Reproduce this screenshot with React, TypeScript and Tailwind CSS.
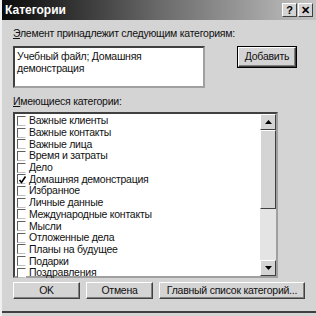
const categories = [
  "Важные клиенты",
  "Важные контакты",
  "Важные лица",
  "Время и затраты",
  "Дело",
  "Домашняя демонстрация",
  "Избранное",
  "Личные данные",
  "Международные контакты",
  "Мысли",
  "Отложенные дела",
  "Планы на будущее",
  "Подарки",
  "Поздравления",
];

function Btn({ label, className }: { label: string; className: string }) {
  return (
    <div
      className={`flex shrink-0 items-center justify-center border border-t-white border-l-white border-r-[#404040] border-b-[#404040] bg-[#d4d4d4] shadow-[inset_-1px_-1px_0_#808080] ${className}`}
    >
      {label}
    </div>
  );
}

function CaptionBtn({ label }: { label: string }) {
  return (
    <div className="flex h-[14px] w-[15px] items-center justify-center border border-t-white border-l-white border-r-[#404040] border-b-[#404040] bg-[#d4d4d4] text-[11px] font-bold leading-none text-black">
      {label}
    </div>
  );
}

export default function App() {
  return (
    <div
      className="flex h-[316px] w-[316px] flex-col overflow-hidden border-l-2 border-l-[#f0f0f0] bg-[#d4d4d4] text-[10.5px] tracking-[-0.25px] text-[#111]"
      style={{ fontFamily: '"Liberation Sans", Arial, sans-serif' }}
    >
      <div className="flex h-[20px] shrink-0 items-center bg-gradient-to-r from-[#0c0c0c] via-[#6a6a6a] to-[#c4c4c4] pl-[3px] pr-[3px]">
        <span className="text-[12px] font-bold tracking-normal text-white">Категории</span>
        <div className="ml-auto flex gap-[1px]">
          <CaptionBtn label="?" />
          <CaptionBtn label="✕" />
        </div>
      </div>

      <div className="flex flex-col pl-[11px]">
        <div className="mt-[7px] h-[13px] shrink-0 leading-[13px]">
          <span className="underline">Э</span>лемент принадлежит следующим категориям:
        </div>
        <div className="mt-[6px] flex shrink-0 items-start">
          <div className="h-[42px] w-[192px] border-2 border-t-[#404040] border-l-[#404040] border-r-[#a0a0a0] border-b-[#a0a0a0] bg-white px-[2px] pt-[2px] leading-[12px]">
            Учебный файл; Домашняя
            <br />
            демонстрация
          </div>
          <div className="ml-[32px] border border-black">
            <Btn label="Добавить" className="h-[20px] w-[58px]" />
          </div>
        </div>

        <div className="mt-[7px] h-[13px] shrink-0 leading-[13px]">
          <span className="underline">И</span>меющиеся категории:
        </div>

        <div className="mt-[4px] flex h-[166px] min-h-[166px] w-[265px] shrink-0 border-2 border-t-[#404040] border-l-[#404040] border-r-[#a0a0a0] border-b-[#a0a0a0] bg-white">
          <div className="flex flex-1 flex-col pl-[2px] pt-[1px]">
            {categories.map((c, i) => (
              <div key={c} className="flex h-[11.7px] min-h-[11.7px] shrink-0 items-center">
                <div className="relative mr-[3px] h-[10px] w-[9px] shrink-0 border border-t-[#606060] border-l-[#606060] border-r-white border-b-[#c0c0c0] bg-white">
                  {i === 5 && (
                    <svg viewBox="0 0 9 10" className="absolute left-0 top-0 h-[10px] w-[9px]">
                      <path d="M1.5 5 L3.5 7.5 L7.5 1.5" stroke="#000" strokeWidth="1.6" fill="none" />
                    </svg>
                  )}
                </div>
                <span className="leading-[11px]">{c}</span>
              </div>
            ))}
          </div>
          <div className="flex w-[16px] flex-col bg-[#e4e4e4]">
            <div className="flex h-[16px] shrink-0 items-center justify-center border border-t-white border-l-white border-r-[#404040] border-b-[#404040] bg-[#d4d4d4]">
              <svg viewBox="0 0 7 4" className="h-[4px] w-[7px]">
                <path d="M3.5 0 L7 4 L0 4 Z" fill="#000" />
              </svg>
            </div>
            <div className="h-[79px] shrink-0 border border-t-white border-l-white border-r-[#404040] border-b-[#404040] bg-[#d4d4d4]" />
            <div className="flex-1" />
            <div className="flex h-[16px] shrink-0 items-center justify-center border border-t-white border-l-white border-r-[#404040] border-b-[#404040] bg-[#d4d4d4]">
              <svg viewBox="0 0 7 4" className="h-[4px] w-[7px]">
                <path d="M0 0 L7 0 L3.5 4 Z" fill="#000" />
              </svg>
            </div>
          </div>
        </div>

        <div className="mt-[4px] flex shrink-0 gap-[6px]">
          <Btn label="OK" className="h-[17px] w-[67px]" />
          <Btn label="Отмена" className="h-[17px] w-[67px]" />
          <Btn label="Главный список категорий..." className="h-[17px] w-[146px]" />
        </div>
      </div>
      <div className="mt-auto mb-[3px] h-[2px] shrink-0 bg-[#404040]" />
    </div>
  );
}
